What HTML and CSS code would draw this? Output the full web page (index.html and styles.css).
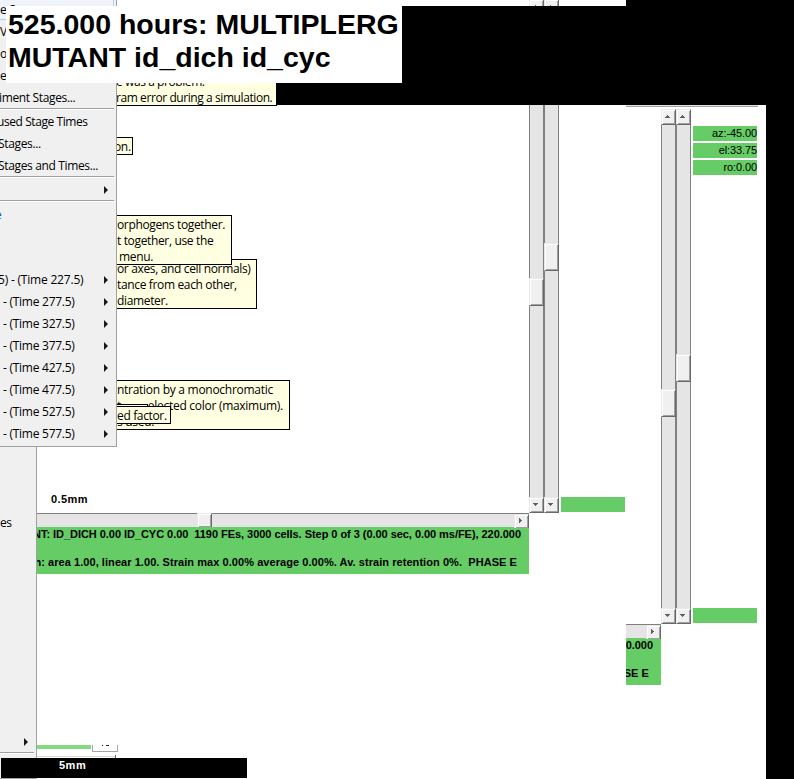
FILE: index.html
```html
<!DOCTYPE html>
<html lang="en">
<head>
<meta charset="utf-8">
<title>Growth viewer</title>
<link rel="stylesheet" href="styles.css">
</head>
<body>
<main class="desktop">
  <div class="shade shade-top"></div>
  <div class="shade shade-corner"></div>
  <div class="shade shade-side"></div>

  <div class="cut-buttons"><i class="btn up"></i><i class="btn up"></i></div>

  <section class="view view-back">
    <div class="canvas-col">
      <div class="canvas"><span class="scale">0.5mm</span></div>
      <div class="hbar"><i class="hthumb"></i><i class="btn right"></i></div>
      <div class="status">
        <p class="s1">NT: ID_DICH 0.00 ID_CYC 0.00&nbsp; 1190 FEs, 3000 cells. Step 0 of 3 (0.00 sec, 0.00 ms/FE), 220.000</p>
        <p class="s2">h: area 1.00, linear 1.00. Strain max 0.00% average 0.00%. Av. strain retention 0%.&nbsp; PHASE E</p>
      </div>
    </div>
    <div class="bars">
      <div class="vbar"><i class="thumb low"></i><i class="btn down"></i></div>
      <div class="vbar"><i class="thumb high"></i><i class="btn down"></i></div>
    </div>
    <div class="readouts"><span class="chip last"></span></div>
  </section>

  <section class="view view-front">
    <div class="canvas-col">
      <div class="canvas"></div>
      <div class="hbar"><i class="btn right"></i></div>
      <div class="status"><p class="s1">0.000</p><p class="s2">.SE E</p></div>
    </div>
    <div class="bars">
      <div class="vbar"><i class="btn up"></i><i class="thumb low"></i><i class="btn down"></i></div>
      <div class="vbar"><i class="btn up"></i><i class="thumb high"></i><i class="btn down"></i></div>
    </div>
    <div class="readouts">
      <span class="chip">az:-45.00</span><span class="chip">el:33.75</span><span class="chip">ro:0.00</span><span class="chip last"></span>
    </div>
  </section>
  <div class="frame-line"></div>

  <div class="tip tip-error"><p>e was a problem.</p><p>ram error during a simulation.</p></div>
  <div class="tip tip-on"><p>on.</p></div>
  <div class="tip tip-axes"><p>or axes, and cell normals)</p><p>tance from each other,</p><p>diameter.</p></div>
  <div class="tip tip-morph"><p>orphogens together.</p><p>t together, use the</p><p class="nudge">menu.</p></div>
  <div class="tip tip-color"><p>ntration by a monochromatic</p><p class="pair"><span>t</span><span>elected color (maximum).</span></p><p>s used.</p></div>
  <div class="tip tip-ghost"></div>
  <div class="tip tip-factor"><p>ed factor.</p></div>

  <nav class="menu menu-back">
    <span class="item es">es</span>
    <span class="item sub last-sub"></span>
    <hr>
  </nav>
  <nav class="menu menu-front">
    <span class="item hot">e S</span>
    <span class="item r1">V</span>
    <span class="item r2">o</span>
    <span class="item r3">e</span>
    <span class="item r4"><b>iment Stages...</b></span>
    <hr>
    <span class="item r5"><b>used Stage Times</b></span>
    <span class="item r6"><b>Stages...</b></span>
    <span class="item r7"><b>Stages and Times...</b></span>
    <hr>
    <span class="item sub"></span>
    <hr>
    <span class="item link">e</span>
    <span class="item gap"></span>
    <span class="item sub wide"><b>5) - (Time 227.5)</b></span>
    <span class="item sub"><b>- (Time 277.5)</b></span>
    <span class="item sub"><b>- (Time 327.5)</b></span>
    <span class="item sub"><b>- (Time 377.5)</b></span>
    <span class="item sub"><b>- (Time 427.5)</b></span>
    <span class="item sub"><b>- (Time 477.5)</b></span>
    <span class="item sub"><b>- (Time 527.5)</b></span>
    <span class="item sub"><b>- (Time 577.5)</b></span>
  </nav>

  <div class="strip"><i class="fill"></i><i class="box"></i></div>
  <div class="rule"></div>
  <div class="scalebar">5mm</div>
  <h1 class="title">525.000 hours: MULTIPLERG<br>MUTANT id_dich id_cyc</h1>
</main>
</body>
</html>
```
FILE: styles.css
```css
* { box-sizing: border-box; }
body, p, h1, hr { margin: 0; }
.desktop {
  position: relative;
  width: 794px;
  height: 779px;
  overflow: hidden;
  background: #fff;
  color: #000;
  font: 12px/16px "Open Sans", sans-serif;
}
b { font-weight: 400; }

.shade { position: absolute; background: #000; }
.shade-top { left: 0; top: 6px; width: 626px; height: 99px; }
.shade-corner { left: 626px; top: 0; width: 168px; height: 105px; }
.shade-side { left: 766px; top: 105px; width: 28px; height: 674px; }
.frame-line { position: absolute; left: 626px; top: 105px; width: 132px; height: 2px; background: #a0a0a0; border-top: 1px solid #e3e3e8; }

/* Scroll bars */
.btn, .thumb, .hthumb {
  display: block;
  flex: none;
  background: #f0f0f0;
  border: 1px solid;
  border-color: #e8e8e8 #696969 #696969 #e8e8e8;
  box-shadow: inset 1px 1px #fff, inset -1px -1px #a0a0a0;
}
.btn { width: 15px; height: 15px; position: relative; }
.btn::after {
  content: "";
  position: absolute;
  left: 3px;
  top: 5px;
  width: 5px;
  height: 3px;
  background: #606060;
}
.up::after { clip-path: polygon(2px 0, 3px 0, 3px 1px, 4px 1px, 4px 2px, 5px 2px, 5px 3px, 0 3px, 0 2px, 1px 2px, 1px 1px, 2px 1px); }
.down::after { clip-path: polygon(0 0, 5px 0, 5px 1px, 4px 1px, 4px 2px, 3px 2px, 3px 3px, 2px 3px, 2px 2px, 1px 2px, 1px 1px, 0 1px); }
.right::after { left: 4px; top: 3px; width: 3px; height: 5px; clip-path: polygon(0 0, 1px 0, 1px 1px, 2px 1px, 2px 2px, 3px 2px, 3px 3px, 2px 3px, 2px 4px, 1px 4px, 1px 5px, 0 5px); }
.cut-buttons { position: absolute; left: 529px; top: 0; width: 30px; height: 6px; display: flex; align-items: flex-end; overflow: hidden; }
.cut-buttons .btn { height: 15px; margin-bottom: -8px; }

.view { position: absolute; display: flex; }
.view-back { left: 37px; top: 105px; width: 589px; height: 469px; }
.view-front { left: 626px; top: 109px; width: 140px; height: 576px; }
.canvas-col { flex: none; display: flex; flex-direction: column; }
.view-back .canvas-col { width: 492px; }
.view-front .canvas-col { width: 35px; overflow: hidden; }
.canvas { flex: 1; display: flex; align-items: flex-end; }
.scale { margin: 0 0 6px 14px; font: bold 11px/16px "Liberation Sans", sans-serif; letter-spacing: 0.4px; }
.hbar { display: flex; height: 14px; background: #e5e5e5; border-top: 1px solid #808080; }
.hbar .btn { height: 14px; margin-left: auto; border-bottom: 0; }
.hthumb { width: 15px; height: 14px; margin: -1px 0 0 160px; border-bottom: 0; }
.status {
  height: 47px;
  background: #66cc66;
  font: bold 11px/14px "Liberation Sans", sans-serif;
  white-space: nowrap;
  overflow: hidden;
}
.status p { display: flex; justify-content: flex-end; }
.s1 { padding-right: 8px; letter-spacing: -0.045px; }
.s2 { padding-right: 12px; margin-top: 14px; letter-spacing: 0.06px; }

.bars { display: flex; flex: none; width: 30px; }
.view-back .bars { height: 408px; }
.view-front .bars { height: 515px; }
.vbar { width: 15px; display: flex; flex-direction: column; background: #e5e5e5; border: solid #808080; border-width: 0 1px; }
.vbar .btn, .vbar .thumb { width: 15px; margin-left: -1px; }
.vbar .down { margin-top: auto; height: 16px; }
.thumb { height: 28px; }
.view-back .low { margin-top: 173px; }
.view-back .high { margin-top: 138px; }
.view-front .up { height: 16px; }
.view-front .low { margin-top: 264px; }
.view-front .high { margin-top: 229px; }

.readouts { display: flex; flex-direction: column; gap: 2px; width: 64px; margin-left: 2px; }
.view-back .readouts { height: 407px; }
.view-front .readouts { height: 514px; padding-top: 17px; }
.chip { height: 15px; flex: none; background: #66cc66; text-align: right; font: 11px/15px "Liberation Sans", sans-serif; letter-spacing: -0.1px; }
.chip.last { margin-top: auto; }

/* Tooltips */
.tip {
  position: absolute;
  display: flex;
  flex-direction: column;
  background: #ffffe1;
  border: 1px solid #000;
  padding: 1px 0 0;
  white-space: pre;
  letter-spacing: -0.35px;
}
.tip-error { left: 60px; top: 56px; width: 217px; height: 50px; padding: 17px 0 0 55px; letter-spacing: -0.42px; }
.tip-on { left: 60px; top: 137px; width: 73px; height: 18px; padding-left: 53px; }
.tip-axes { left: 60px; top: 259px; width: 197px; height: 50px; padding-left: 56px; }
.tip-morph { left: 60px; top: 215px; width: 172px; height: 50px; padding-left: 56px; }
.nudge { padding-left: 2px; }
.tip-color { left: 60px; top: 380px; width: 230px; height: 50px; padding-left: 56px; letter-spacing: -0.28px; }
.pair { display: flex; justify-content: space-between; width: 166px; }
.tip-ghost { left: 60px; top: 404px; width: 88px; height: 18px; }
.tip-factor { left: 60px; top: 406px; width: 111px; height: 18px; padding-left: 56px; }

/* Menus */
.menu { position: absolute; left: 0; display: flex; flex-direction: column; background: #f0f0f0; border: solid #a0a0a0; border-width: 0 1px 1px 0; white-space: pre; overflow: hidden; letter-spacing: -0.35px; }
.menu-back { top: 440px; width: 37px; height: 339px; }
.menu-front { top: 0; width: 117px; height: 447px; }
.item { flex: none; height: 22px; line-height: 24px; display: flex; position: relative; }
.menu hr { flex: none; width: 114px; height: 2px; border: 0; background: #a0a0a0; border-bottom: 1px solid #fff; }
.menu-back hr { width: 34px; margin-top: -1px; }
.es { margin-top: 71px; letter-spacing: -0.6px; line-height: 23px; }
.last-sub { margin-top: 198px; }
.hot { height: 20px; width: 114px; line-height: 20px; background: #eff3fa; border: 1px solid #aecff7; border-width: 0 1px 1px 0; }
.r4 b { margin-left: -1px; }
.r5 b { margin-left: -3px; letter-spacing: -0.42px; }
.r6 b { margin-left: -2px; }
.r7 b { margin-left: -2px; }
.sub::after {
  content: "";
  position: absolute;
  right: 8px;
  top: 8px;
  border: 4px solid transparent;
  border-left-color: #1a1a1a;
  border-right: 0;
}
.last-sub::after { top: 7px; }
.link { color: #0066cc; margin: 1px 0 0 -5px; }
.gap { height: 43px; }
.sub b { margin-left: 3px; letter-spacing: -0.26px; }
.wide b { margin-left: -2px; letter-spacing: -0.2px; }

/* Clipped strip behind the scale bar */
.strip { position: absolute; left: 37px; top: 745px; display: flex; gap: 1px; }
.fill { width: 54px; height: 4px; background: #84d984; }
.box { width: 26px; height: 7px; border: solid #a6a6ad; border-width: 0 1px 1px; background: linear-gradient(#222, #222) 9px 0 / 1px 1px no-repeat, linear-gradient(#222, #222) 13px 0 / 3px 1px no-repeat; }
.rule { position: absolute; left: 37px; top: 755px; width: 79px; height: 3px; border-right: 1px solid #696969; background: linear-gradient(#ddd, #ddd) 0 1px / 100% 1px no-repeat; }
.scalebar { position: absolute; left: 1px; top: 758px; width: 246px; height: 20px; padding-left: 58px; background: #000; color: #fff; font: bold 11px/15px "Liberation Sans", sans-serif; letter-spacing: 0.5px; }
.title { position: absolute; left: 6px; top: 6px; width: 396px; height: 77px; padding: 2px 0 0 2px; background: #fff; font: bold 28.5px/33px "Liberation Sans", sans-serif; white-space: nowrap; }
```
